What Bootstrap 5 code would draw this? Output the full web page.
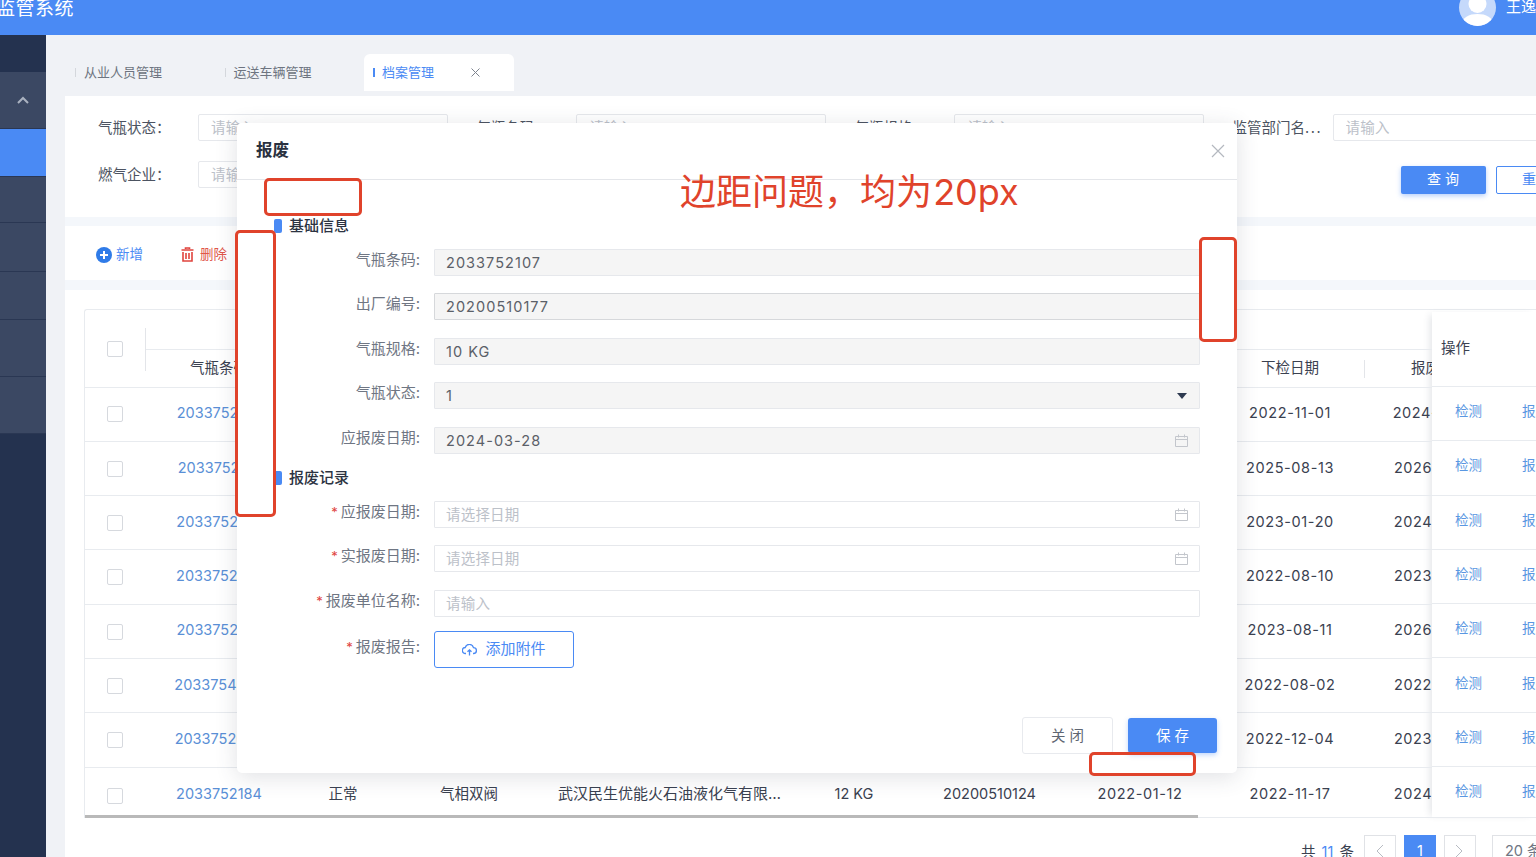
<!DOCTYPE html>
<html lang="zh-CN">
<head>
<meta charset="utf-8">
<title>监管系统</title>
<link rel="stylesheet" href="https://cdn.jsdelivr.net/npm/bootstrap@5.3.0/dist/css/bootstrap.min.css">
<style>
:root{--blue:#4a8af4;--red:#e0432b;--txt:#3a4150;--lab:#6f7683;--ph:#bcc1c9;}
html,body{height:857px;overflow:hidden;}
body{font-family:Inter,"Noto Sans CJK SC",sans-serif;font-size:14.5px;color:var(--txt);background:#fff;}
.page-wrap{position:relative;width:1536px;height:857px;overflow:hidden;}
.top-bar{height:35px;background:var(--blue);color:#fff;overflow:hidden;}
.brand{font-size:19px;letter-spacing:.5px;line-height:20px;margin:-1px 0 0 -4px;}
.avatar{width:37px;height:37px;border-radius:50%;background:#c5d9fb;overflow:hidden;margin:-11px 10px 0 0;}
.user-name{font-size:15px;line-height:20px;margin-top:-3px;width:30px;white-space:nowrap;}
.body-row{height:822px;}
.side{width:46px;background:#24324f;}
.side-top{height:37px;}
.side-item{background:#3b4863;border-bottom:1px solid #2a3753;}
.side-item.on{background:var(--blue);border-bottom-color:#2a3753;}
.h56{height:57px;}.h47{height:48px;}.h46{height:46px;}.h49{height:49px;}.h48{height:48px;}.h57{height:57px;}
.main-area{flex:1;min-width:0;background:#f0f2f6;padding-left:19px;}
.tab-strip{height:61px;padding-top:19px;}
.tab-one{width:149.5px;height:37px;padding-left:10px;font-size:13px;color:#6d7480;flex:none;}
.tab-one.on{background:#fff;color:var(--blue);border-radius:6px 6px 0 0;}
.tick{width:1px;height:9px;background:#d4d7dc;margin-right:8px;}
.on .tick{width:2px;background:var(--blue);margin-right:7px;margin-left:-1px;}
.tab-x{margin-left:37px;width:9px;height:9px;}
.sheet{background:#fff;}
.filter-sheet{height:121px;padding:18px 0 0 33px;}
.filter-grid{display:grid;grid-template-columns:repeat(4,378.2px);row-gap:20px;width:1600px;}
.f-label{width:100px;flex:none;font-size:14.5px;color:#4c5361;line-height:27px;white-space:nowrap;}
.f-label b{font-weight:400;letter-spacing:1.6px;}
.f-input{width:250px;height:27px;flex:none;border:1px solid #e6e8ec;border-radius:2px;padding:0 12px;font-size:14.5px;box-shadow:none;}
.f-input::placeholder,.m-input::placeholder{color:var(--ph);opacity:1;letter-spacing:.2px;}
.btn-query{width:85px;height:28px;margin:5px 0 0 168px;padding:0 0 3px 4px;background:var(--blue);border:0;border-radius:2px;color:#fff;font-size:14px;letter-spacing:4px;box-shadow:0 2px 5px rgba(74,138,244,.4);}
.btn-reset{width:85px;height:28px;margin:5px 0 0 10px;padding:0 0 3px 4px;background:#fff;border:1px solid var(--blue);border-radius:2px;color:var(--blue);font-size:14px;letter-spacing:4px;}
.band-a{height:9px;background:#f4f7fb;}
.band-b{height:10px;background:#f4f7fb;}
.act-sheet{height:54px;padding:3px 0 0 31px;font-size:13.5px;}
.act-blue{color:var(--blue);width:85px;}
.act-red{color:#e0564a;}
.act-red svg{margin-right:2px;}
.data-sheet{height:567px;padding:19px 0 0 19px;}
.data-frame{border-top:1px solid #e8ebef;border-left:1px solid #e8ebef;border-radius:3px 0 0 0;width:1452px;}
.scroll-part{width:1347px;overflow:hidden;flex:none;position:relative;}
.grid-tb{table-layout:fixed;width:1426px;margin:0;font-size:14.5px;color:var(--txt);border-collapse:collapse;}
.grid-tb td,.grid-tb th{padding:0;border:0;border-bottom:1px solid #e8ebef;text-align:center;vertical-align:middle;white-space:nowrap;overflow:hidden;font-weight:400;box-shadow:none;}
.grid-tb thead tr.tier-a th{height:39px;}
.grid-tb thead tr.tier-b th{height:38px;position:relative;padding-bottom:1px;}
.grid-tb thead tr.tier-b th.shift-r{padding-left:4px;}
.grid-tb tbody tr{height:54.3px;}
.grid-tb tbody tr:last-child{height:50.5px;}
.grid-tb tbody td{padding-bottom:2px;}
.grid-tb tbody tr:last-child td{padding:4px 0 0;}
.grid-tb td.cell-co{font-size:15px;}
.grid-tb td.cell-dt{letter-spacing:.6px;}
.code-link{color:#5a8fd6;text-decoration:none;}
.tick-box{width:16px;height:16px;border:1px solid #d6d9de;border-radius:2px;display:inline-block;vertical-align:middle;}
.th-rule{position:absolute;right:0;top:10px;width:1px;height:18px;background:#e3e5e9;}
.sep-v{position:absolute;left:60px;top:18px;width:1px;height:43px;background:#e3e5e9;}
.grid-scroll-bar{height:3px;width:1113px;background:#b9b9b9;margin-top:-3px;position:relative;}
.fixed-part{width:105px;flex:none;background:#fff;box-shadow:-5px 0 7px -3px rgba(60,70,90,.14);margin-top:2px;}
.fx-head{height:75px;padding:0 0 3px 9px;border-bottom:1px solid #e8ebef;}
.fx-row{height:54.3px;padding:0 0 5px 23px;border-bottom:1px solid #e8ebef;color:#5a97e2;font-size:13.5px;white-space:nowrap;overflow:hidden;}
.fx-row.tail{height:50.5px;padding-bottom:2px;}
.fx-row span+span{margin-left:40px;}
.pager-row{height:40px;padding:17px 0 0 1217px;font-size:14.5px;white-space:nowrap;}
.pg-total{word-spacing:2px;margin-right:2px;padding-top:6px;}
.pg-box{width:32px;height:32px;border:1px solid #e0e2e6;color:#b7bbc2;margin-left:8px;flex:none;}
.pg-box.on{background:var(--blue);border-color:var(--blue);color:#fff;}
.pg-size{width:80px;height:32px;border:1px solid #e0e2e6;margin-left:16px;padding-left:12px;color:#6f7683;flex:none;}
.blue-num{color:var(--blue);}
.dlg{position:absolute;left:237px;top:123px;width:1000px;height:650px;background:#fff;border-radius:5px;box-shadow:0 4px 22px rgba(60,70,90,.16);display:flex;flex-direction:column;}
.dlg-head{height:57px;padding:0 12px 0 19px;border-bottom:1px solid #e4e6ea;}
.dlg-title{font-size:16.5px;font-weight:600;color:#2a3140;margin-bottom:2px;}
.dlg-x{width:14px;height:14px;}
.dlg-body{flex:1;padding:38px 37px 0;}
.sec-head{height:16px;font-size:15px;font-weight:500;color:#2c3342;margin-bottom:15px;}
.sec-head.next{margin-top:-1px;}
.sec-mark{width:8px;height:14px;border-radius:2px;background:var(--blue);margin-right:7px;}
.frow{height:27px;margin-bottom:17.4px;}
.m-label{width:146px;flex:none;text-align:right;font-size:15px;color:var(--lab);line-height:20px;margin-top:1px;white-space:nowrap;}
.m-label.low{margin-top:3px;}
.m-label i{color:#e0443e;font-style:normal;font-size:13px;margin-right:3px;}
.m-field{margin-left:14px;flex:1;position:relative;}
.m-input{height:27px;border:1px solid #e6e8ec;border-radius:1px;padding:0 11px;font-size:14.5px;color:#5b6068;box-shadow:none;width:100%;letter-spacing:1.05px;background:#fff;}
.m-input.form-control:disabled,.m-input.off{background:#f5f5f5;color:#5b6068;opacity:1;}
.m-input.dk{border-color:#d6d8db;}
.cal{position:absolute;right:12px;top:7px;width:13px;height:13px;}
.caret-i{position:absolute;right:13px;top:11px;width:10px;height:6px;}
.upl{width:140px;height:37px;border:1px solid var(--blue);border-radius:3px;background:#fff;color:var(--blue);font-size:15px;padding:0;margin-top:-3px;}
.dlg-foot{height:56px;padding-right:20px;align-items:flex-start;}
.btn-shut{width:91px;height:37px;padding:0 0 0 4px;background:#fff;border:1px solid #e8eaee;border-radius:3px;color:#5f6672;font-size:14.5px;letter-spacing:4px;}
.btn-keep{width:89px;height:35px;padding:0 0 0 4px;margin:1px 0 0 15px;background:var(--blue);border:0;border-radius:3px;color:#fff;font-size:14.5px;letter-spacing:4px;box-shadow:0 2px 5px rgba(74,138,244,.35);}
.mark-box{position:absolute;border:3px solid var(--red);border-radius:5px;}
.mb1{left:264px;top:178px;width:98px;height:38px;}
.mb2{left:235px;top:230px;width:41px;height:287px;}
.mb3{left:1199px;top:237px;width:38px;height:105px;}
.mb4{left:1089px;top:752px;width:107px;height:24px;}
.mark-note{position:absolute;left:680px;top:167px;font-size:36px;line-height:50px;color:var(--red);white-space:nowrap;word-spacing:-9px;}
</style>
</head>
<body>
<div class="page-wrap">
  <header class="top-bar d-flex align-items-start justify-content-between">
    <div class="brand">监管系统</div>
    <div class="d-flex align-items-start">
      <div class="avatar"><svg viewBox="0 0 37 37" width="37" height="37"><circle cx="18.5" cy="15" r="9" fill="#fff"/><path d="M2 37c1-9 8-12 16.5-12S34 28 35 37z" fill="#fff"/></svg></div>
      <div class="user-name">王逸</div>
    </div>
  </header>
  <div class="d-flex body-row">
    <nav class="side d-flex flex-column">
      <div class="side-top"></div>
      <div class="side-item h56 d-flex justify-content-center pt-4"><svg width="12" height="8" viewBox="0 0 12 8"><path d="M1 7l5-5 5 5" fill="none" stroke="#aab2c0" stroke-width="2"/></svg></div>
      <div class="side-item on h47"></div>
      <div class="side-item h46"></div>
      <div class="side-item h49"></div>
      <div class="side-item h48"></div>
      <div class="side-item h57"></div>
      <div class="side-item h57"></div>
    </nav>
    <main class="main-area">
      <div class="tab-strip d-flex">
        <div class="tab-one d-flex align-items-center"><span class="tick"></span>从业人员管理</div>
        <div class="tab-one d-flex align-items-center"><span class="tick"></span>运送车辆管理</div>
        <div class="tab-one on d-flex align-items-center"><span class="tick"></span>档案管理<svg class="tab-x" viewBox="0 0 9 9"><path d="M.5.5l8 8M8.500.5l-8 8" stroke="#7d838e"/></svg></div>
      </div>
      <section class="sheet filter-sheet">
        <div class="filter-grid">
          <div class="d-flex"><label class="f-label">气瓶状态：</label><input class="form-control f-input" placeholder="请输入"></div>
          <div class="d-flex"><label class="f-label">气瓶条码：</label><input class="form-control f-input" placeholder="请输入"></div>
          <div class="d-flex"><label class="f-label">气瓶规格：</label><input class="form-control f-input" placeholder="请输入"></div>
          <div class="d-flex"><label class="f-label">监管部门名<b>...</b></label><input class="form-control f-input" placeholder="请输入"></div>
          <div class="d-flex"><label class="f-label">燃气企业：</label><input class="form-control f-input" placeholder="请输入"></div>
          <div></div><div></div>
          <div class="d-flex align-items-start"><button class="btn btn-query">查询</button><button class="btn btn-reset">重置</button></div>
        </div>
      </section>
      <div class="band-a"></div>
      <section class="sheet act-sheet d-flex align-items-center">
        <div class="act-blue d-flex align-items-center gap-1"><svg width="16" height="16" viewBox="0 0 16 16"><circle cx="8" cy="8" r="8" fill="#2f7be8"/><path d="M8 4v8M4 8h8" stroke="#fff" stroke-width="2"/></svg><span>新增</span></div>
        <div class="act-red d-flex align-items-center gap-1"><svg width="13" height="15" viewBox="0 0 13 15"><path d="M4.500 2V1h4v1M.5 3h12M2 5v9h9V5M5 6v6M8 6v6" fill="none" stroke="#e0443e" stroke-width="1.6"/></svg><span>删除</span></div>
      </section>
      <div class="band-b"></div>
      <section class="sheet data-sheet">
        <div class="data-frame d-flex">
          <div class="scroll-part">
            <span class="sep-v"></span>
            <table class="table grid-tb">
              <colgroup><col style="width:60px"><col style="width:148px"><col style="width:100px"><col style="width:152px"><col style="width:249px"><col style="width:120px"><col style="width:151px"><col style="width:150px"><col style="width:150px"><col style="width:146px"></colgroup>
              <thead>
                <tr class="tier-a"><th rowspan="2"><span class="tick-box"></span></th><th colspan="9"></th></tr>
                <tr class="tier-b"><th>气瓶条码</th><th>气瓶状态</th><th>阀门类型</th><th>燃气企业</th><th>气瓶规格</th><th>出厂编号</th><th>上检日期</th><th>下检日期<span class="th-rule"></span></th><th class="shift-r">报废日期</th></tr>
              </thead>
              <tbody>
                <tr><td><span class="tick-box"></span></td><td><a class="code-link" href="#">2033752107</a></td><td>正常</td><td>气相双阀</td><td class="cell-co">武汉民生优能火石油液化气有限…</td><td>10 KG</td><td>20200510177</td><td class="cell-dt">2021-11-01</td><td class="cell-dt">2022-11-01</td><td class="cell-dt">2024-03-28</td></tr>
                <tr><td><span class="tick-box"></span></td><td><a class="code-link" href="#">2033752116</a></td><td>正常</td><td>气相双阀</td><td class="cell-co">武汉民生优能火石油液化气有限…</td><td>12 KG</td><td>20200510120</td><td class="cell-dt">2021-08-13</td><td class="cell-dt">2025-08-13</td><td class="cell-dt">2026-05-10</td></tr>
                <tr><td><span class="tick-box"></span></td><td><a class="code-link" href="#">2033752135</a></td><td>正常</td><td>气相双阀</td><td class="cell-co">武汉民生优能火石油液化气有限…</td><td>12 KG</td><td>20200510131</td><td class="cell-dt">2022-01-20</td><td class="cell-dt">2023-01-20</td><td class="cell-dt">2024-05-10</td></tr>
                <tr><td><span class="tick-box"></span></td><td><a class="code-link" href="#">2033752146</a></td><td>正常</td><td>气相双阀</td><td class="cell-co">武汉民生优能火石油液化气有限…</td><td>12 KG</td><td>20200510142</td><td class="cell-dt">2021-08-10</td><td class="cell-dt">2022-08-10</td><td class="cell-dt">2023-05-10</td></tr>
                <tr><td><span class="tick-box"></span></td><td><a class="code-link" href="#">2033752152</a></td><td>正常</td><td>气相双阀</td><td class="cell-co">武汉民生优能火石油液化气有限…</td><td>12 KG</td><td>20200510153</td><td class="cell-dt">2022-08-11</td><td class="cell-dt">2023-08-11</td><td class="cell-dt">2026-05-10</td></tr>
                <tr><td><span class="tick-box"></span></td><td><a class="code-link" href="#">2033754086</a></td><td>正常</td><td>气相双阀</td><td class="cell-co">武汉民生优能火石油液化气有限…</td><td>12 KG</td><td>20200510164</td><td class="cell-dt">2021-08-02</td><td class="cell-dt">2022-08-02</td><td class="cell-dt">2022-05-10</td></tr>
                <tr><td><span class="tick-box"></span></td><td><a class="code-link" href="#">2033752086</a></td><td>正常</td><td>气相双阀</td><td class="cell-co">武汉民生优能火石油液化气有限…</td><td>12 KG</td><td>20200510175</td><td class="cell-dt">2021-12-04</td><td class="cell-dt">2022-12-04</td><td class="cell-dt">2023-05-10</td></tr>
                <tr><td><span class="tick-box"></span></td><td><a class="code-link" href="#">2033752184</a></td><td>正常</td><td>气相双阀</td><td class="cell-co">武汉民生优能火石油液化气有限…</td><td>12 KG</td><td>20200510124</td><td class="cell-dt">2022-01-12</td><td class="cell-dt">2022-11-17</td><td class="cell-dt">2024-05-10</td></tr>
              </tbody>
            </table>
            <div class="grid-scroll-bar"></div>
          </div>
          <div class="fixed-part">
            <div class="fx-head d-flex align-items-center">操作</div>
            <div class="fx-row d-flex align-items-center"><span>检测</span><span>报废</span></div>
            <div class="fx-row d-flex align-items-center"><span>检测</span><span>报废</span></div>
            <div class="fx-row d-flex align-items-center"><span>检测</span><span>报废</span></div>
            <div class="fx-row d-flex align-items-center"><span>检测</span><span>报废</span></div>
            <div class="fx-row d-flex align-items-center"><span>检测</span><span>报废</span></div>
            <div class="fx-row d-flex align-items-center"><span>检测</span><span>报废</span></div>
            <div class="fx-row d-flex align-items-center"><span>检测</span><span>报废</span></div>
            <div class="fx-row tail d-flex align-items-center"><span>检测</span><span>报废</span></div>
          </div>
        </div>
        <div class="pager-row d-flex align-items-start">
          <span class="pg-total">共 <span class="blue-num">11</span> 条</span>
          <span class="pg-box d-flex align-items-center justify-content-center"><svg width="9" height="14" viewBox="0 0 9 14"><path d="M8 1L2 7l6 6" fill="none" stroke="#b7bbc2"/></svg></span>
          <span class="pg-box on d-flex align-items-center justify-content-center">1</span>
          <span class="pg-box d-flex align-items-center justify-content-center"><svg width="9" height="14" viewBox="0 0 9 14"><path d="M1 1l6 6-6 6" fill="none" stroke="#b7bbc2"/></svg></span>
          <span class="pg-size d-flex align-items-center">20 条/页</span>
        </div>
      </section>
    </main>
  </div>

  <div class="dlg" role="dialog">
    <div class="dlg-head d-flex align-items-center justify-content-between">
      <div class="dlg-title">报废</div>
      <svg class="dlg-x" viewBox="0 0 14 14"><path d="M1 1l12 12M13 1L1 13" stroke="#b4b8bf" stroke-width="1.2"/></svg>
    </div>
    <div class="dlg-body">
      <div class="sec-head d-flex align-items-center"><span class="sec-mark"></span>基础信息</div>
      <div class="frow d-flex"><div class="m-label">气瓶条码:</div><div class="m-field"><input class="form-control m-input" disabled value="2033752107"></div></div>
      <div class="frow d-flex"><div class="m-label">出厂编号:</div><div class="m-field"><input class="form-control m-input dk" disabled value="20200510177"></div></div>
      <div class="frow d-flex"><div class="m-label">气瓶规格:</div><div class="m-field"><input class="form-control m-input" disabled value="10 KG"></div></div>
      <div class="frow d-flex"><div class="m-label">气瓶状态:</div><div class="m-field"><div class="form-control m-input off d-flex align-items-center">1</div><svg class="caret-i" viewBox="0 0 10 6"><path d="M0 0h10L5 6z" fill="#2e3a50"/></svg></div></div>
      <div class="frow d-flex"><div class="m-label">应报废日期:</div><div class="m-field"><input class="form-control m-input" disabled value="2024-03-28"><svg class="cal" viewBox="0 0 13 13"><path d="M.5 2.500h12v10H.5zM.5 5.500h12M3.500.5v3M9.500.5v3" fill="none" stroke="#c3c6cc"/></svg></div></div>
      <div class="sec-head next d-flex align-items-center"><span class="sec-mark"></span>报废记录</div>
      <div class="frow d-flex"><div class="m-label"><i>*</i>应报废日期:</div><div class="m-field"><input class="form-control m-input" placeholder="请选择日期"><svg class="cal" viewBox="0 0 13 13"><path d="M.5 2.500h12v10H.5zM.5 5.500h12M3.500.5v3M9.500.5v3" fill="none" stroke="#c3c6cc"/></svg></div></div>
      <div class="frow d-flex"><div class="m-label"><i>*</i>实报废日期:</div><div class="m-field"><input class="form-control m-input" placeholder="请选择日期"><svg class="cal" viewBox="0 0 13 13"><path d="M.5 2.500h12v10H.5zM.5 5.500h12M3.500.5v3M9.500.5v3" fill="none" stroke="#c3c6cc"/></svg></div></div>
      <div class="frow d-flex"><div class="m-label"><i>*</i>报废单位名称:</div><div class="m-field"><input class="form-control m-input" placeholder="请输入"></div></div>
      <div class="frow d-flex"><div class="m-label low"><i>*</i>报废报告:</div><div class="m-field"><button class="btn upl d-flex align-items-center justify-content-center gap-2"><svg width="15" height="12" viewBox="0 0 15 12"><path d="M4 9.500H3.500a3 3 0 0 1-.3-6 4.300 4.300 0 0 1 8.300.2 2.900 2.900 0 0 1 0 5.800H11M7.500 11.500V6M5.500 7.800l2-2 2 2" fill="none" stroke="#4a8af4" stroke-width="1.300"/></svg>添加附件</button></div></div>
    </div>
    <div class="dlg-foot d-flex justify-content-end">
      <button class="btn btn-shut">关闭</button>
      <button class="btn btn-keep">保存</button>
    </div>
  </div>

  <div class="mark-box mb1"></div>
  <div class="mark-box mb2"></div>
  <div class="mark-box mb3"></div>
  <div class="mark-box mb4"></div>
  <div class="mark-note">边距问题，均为 20px</div>
</div>
<script src="https://cdn.jsdelivr.net/npm/bootstrap@5.3.0/dist/js/bootstrap.bundle.min.js"></script>
</body>
</html>
